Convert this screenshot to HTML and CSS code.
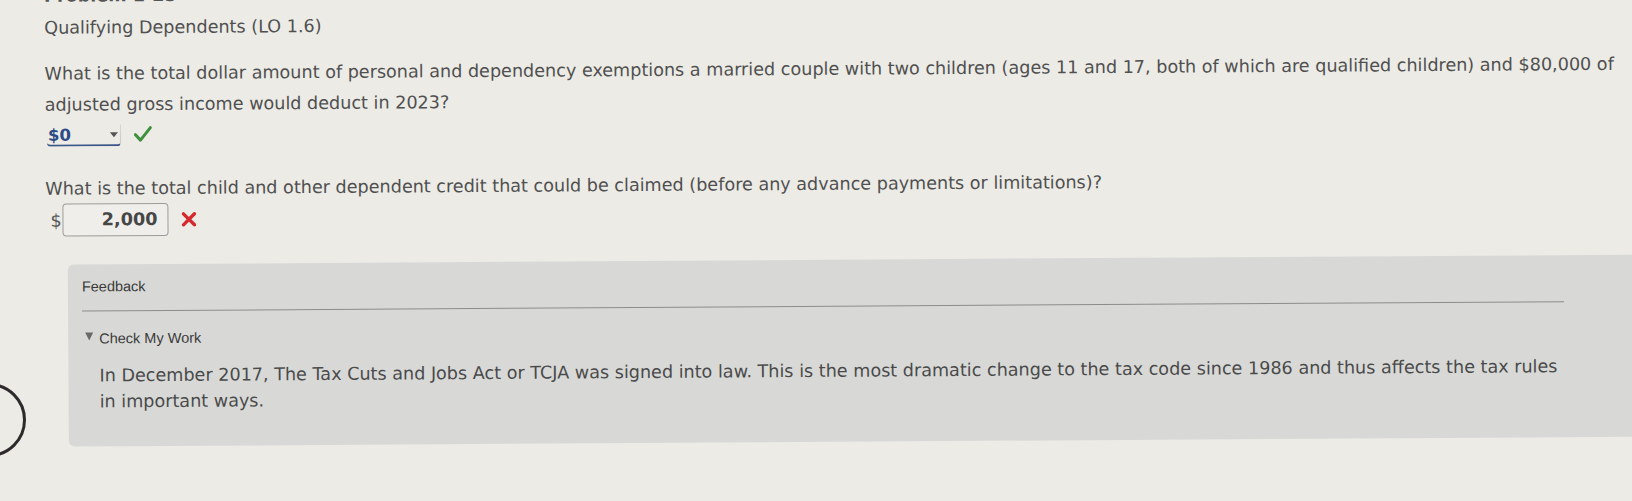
FILE: index.html
```html
<!DOCTYPE html>
<html>
<head>
<meta charset="utf-8">
<link rel="stylesheet" href="styles.css">
</head>
<body>
<div class="page">
  <div class="problem">Problem 1-25</div>
  <div class="title">Qualifying Dependents (LO 1.6)</div>
  <p class="q1">What is the total dollar amount of personal and dependency exemptions a married couple with two children (ages 11 and 17, both of which are qualified children) and $80,000 of adjusted gross income would deduct in 2023?</p>
  <div class="answer1">
    <span class="select">$0<span class="caret"></span></span>
    <svg class="check" width="18" height="16" viewBox="0 0 18 16"><path d="M1.5 8.5 L6.5 14 L16.5 1.5" fill="none" stroke="#3f913c" stroke-width="3" stroke-linecap="round" stroke-linejoin="round"/></svg>
  </div>
  <p class="q2">What is the total child and other dependent credit that could be claimed (before any advance payments or limitations)?</p>
  <div class="answer2">
    <span class="dollar">$</span>
    <span class="input">2,000</span>
    <svg class="cross" width="15" height="15" viewBox="0 0 15 15"><path d="M2 2 L13 13 M13 2 L2 13" fill="none" stroke="#d42a2e" stroke-width="3.4" stroke-linecap="round"/></svg>
  </div>
  <div class="feedback">
    <div class="fb-title">Feedback</div>
    <div class="fb-rule"></div>
    <div class="cmw"><span class="tri"></span>Check My Work</div>
    <p class="fb-text">In December 2017, The Tax Cuts and Jobs Act or TCJA was signed into law. This is the most dramatic change to the tax code since 1986 and thus affects the tax rules in important ways.</p>
  </div>
</div>
<div class="circle"></div>
</body>
</html>
```
FILE: styles.css
```css
html, body {
  margin: 0;
  padding: 0;
  background: #ecebe6;
  overflow: hidden;
  height: 501px;
}
.page {
  padding-left: 44px;
  font-family: "DejaVu Sans", Verdana, sans-serif;
  font-size: 17.6px;
  color: #505050;
  transform: rotate(-0.36deg);
  transform-origin: 0 0;
}
.problem {
  font-weight: bold;
  line-height: 20px;
  height: 20px;
  margin-top: -14px;
  color: #555;
}
.title {
  line-height: 20px;
  margin-top: 12px;
}
.q1 {
  line-height: 31px;
  margin: 21px 0 0 0;
  width: 1585px;
}
.answer1 {
  display: flex;
  align-items: center;
  gap: 13px;
  margin-left: 2px;
  margin-top: 4px;
  height: 22px;
}
.select {
  box-sizing: border-box;
  display: inline-flex;
  align-items: center;
  justify-content: space-between;
  width: 74px;
  height: 22px;
  padding-left: 1px;
  font-weight: bold;
  font-size: 16.5px;
  color: #2b4a86;
  border-bottom: 2px solid #3b5688;
  border-right: 1px solid #c9c9c6;
  border-radius: 0 0 4px 4px;
}
.caret {
  width: 0;
  height: 0;
  border-left: 4px solid transparent;
  border-right: 4px solid transparent;
  border-top: 5px solid #555;
  margin-right: 2px;
}
.check { display: block; margin-top: -2px; }
.q2 {
  line-height: 22px;
  margin: 31px 0 0 0;
}
.answer2 {
  display: flex;
  align-items: center;
  margin-top: 4px;
  margin-left: 5px;
  height: 33px;
}
.dollar {
  width: 12px;
  color: #555;
}
.input {
  box-sizing: border-box;
  width: 106px;
  height: 33px;
  border: 1.5px solid #9c9c9a;
  border-radius: 4px;
  background: #efeeea;
  text-align: right;
  padding-right: 10px;
  font-weight: bold;
  line-height: 30px;
  color: #464646;
}
.cross {
  display: block;
  margin-left: 13px;
}
.feedback {
  box-sizing: border-box;
  margin-top: 28px;
  margin-left: 22px;
  margin-right: -20px;
  height: 182px;
  background: #d8d9d7;
  border-radius: 6px 0 0 6px;
  padding: 13px 0 0 14px;
}
.fb-title {
  font-family: "Liberation Sans", Arial, sans-serif;
  font-size: 14.5px;
  color: #3a3a3a;
  line-height: 18px;
}
.fb-rule {
  margin-top: 15px;
  width: 1482px;
  border-top: 1.5px solid #8c8c8a;
}
.cmw {
  font-family: "Liberation Sans", Arial, sans-serif;
  font-size: 14.5px;
  color: #3a3a3a;
  line-height: 18px;
  margin-top: 18px;
  margin-left: 3px;
  display: flex;
  align-items: center;
}
.tri {
  width: 0;
  height: 0;
  border-left: 4px solid transparent;
  border-right: 4px solid transparent;
  border-top: 8px solid #6a6a6a;
  margin-right: 6px;
  margin-top: -4px;
}
.fb-text {
  line-height: 26px;
  margin: 15px 0 0 17px;
  width: 1470px;
  color: #4a4a4a;
}
.circle {
  position: absolute;
  left: -48px;
  top: 383px;
  width: 68px;
  height: 68px;
  border: 3px solid #2e2a2c;
  border-radius: 50%;
}
```
